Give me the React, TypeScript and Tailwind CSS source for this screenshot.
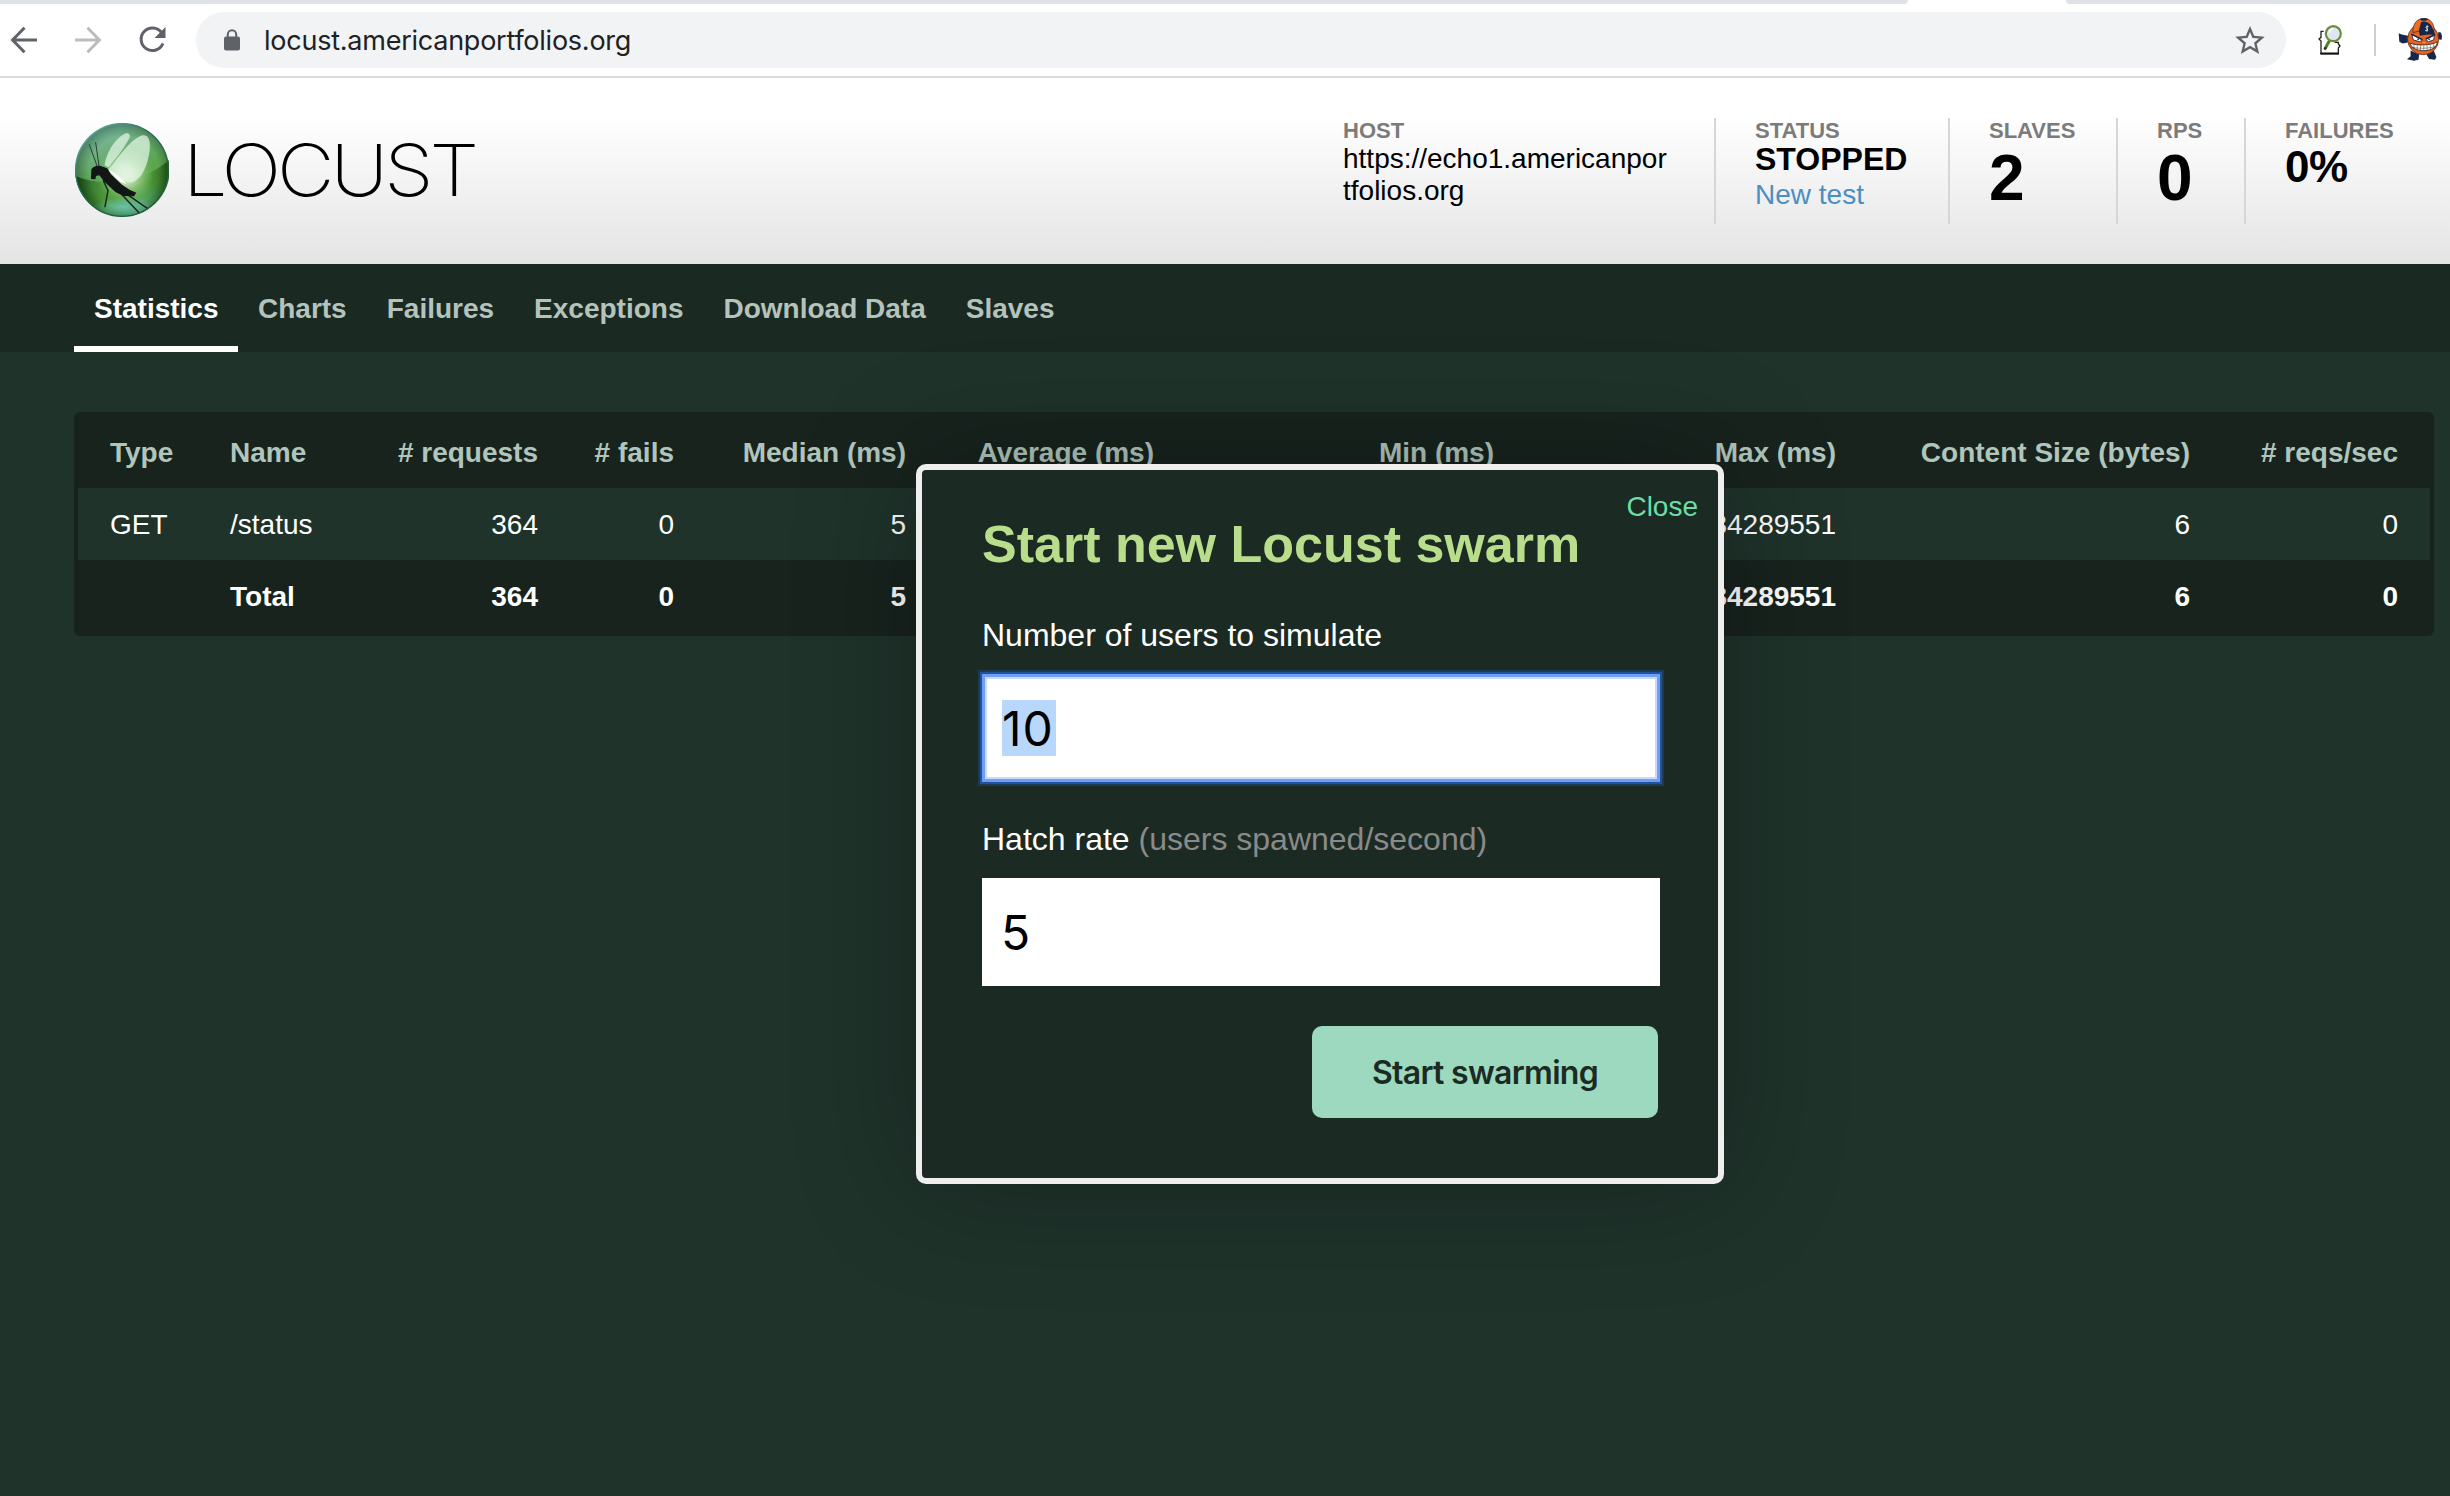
import React from "react";

const ARIAL = "font-['Liberation_Sans',Arial,sans-serif]";

function LocustLogo() {
  return (
    <svg viewBox="45 39 282 282" className="size-[94px] shrink-0">
      <defs>
        <linearGradient id="ball" x1="0.2" y1="0" x2="0.6" y2="1">
          <stop offset="0" stopColor="#84cbc6" />
          <stop offset="0.22" stopColor="#74b38b" />
          <stop offset="0.5" stopColor="#5fa75c" />
          <stop offset="0.75" stopColor="#57a33d" />
          <stop offset="1" stopColor="#5cae8e" />
        </linearGradient>
        <radialGradient id="edge" cx="0.52" cy="0.52" r="0.5">
          <stop offset="0.75" stopColor="#0b3a10" stopOpacity="0" />
          <stop offset="1" stopColor="#062a0a" stopOpacity="0.7" />
        </radialGradient>
        <radialGradient id="glow" cx="0.5" cy="0.5" r="0.5">
          <stop offset="0" stopColor="#ffffff" />
          <stop offset="0.3" stopColor="#eaf8df" stopOpacity="0.9" />
          <stop offset="1" stopColor="#8ed07a" stopOpacity="0" />
        </radialGradient>
        <linearGradient id="rim" x1="0" y1="0" x2="0.8" y2="1">
          <stop offset="0" stopColor="#7cc7cc" />
          <stop offset="0.4" stopColor="#2c6f5c" />
          <stop offset="1" stopColor="#1d5a35" />
        </linearGradient>
        <linearGradient id="lower" x1="0" y1="0" x2="1" y2="0">
          <stop offset="0" stopColor="#0f3a0c" stopOpacity="0.9" />
          <stop offset="0.35" stopColor="#2f7a20" stopOpacity="0.2" />
          <stop offset="0.7" stopColor="#3f8f28" stopOpacity="0.1" />
          <stop offset="1" stopColor="#0f3a0c" stopOpacity="0.8" />
        </linearGradient>
        <radialGradient id="foot" cx="0.5" cy="0.5" r="0.5">
          <stop offset="0" stopColor="#6cc3b0" stopOpacity="0.9" />
          <stop offset="1" stopColor="#6cc3b0" stopOpacity="0" />
        </radialGradient>
      </defs>
      <circle cx="186" cy="180" r="140" fill="url(#ball)" />
      <path d="M46 196C90 226 240 230 326 150A140 140 0 0 1 186 320A140 140 0 0 1 46 196Z" fill="url(#lower)" />
      <circle cx="186" cy="180" r="140" fill="url(#edge)" opacity="0.5" />
      <ellipse cx="190" cy="290" rx="90" ry="30" fill="url(#foot)" />
      <circle cx="196" cy="195" r="85" fill="url(#glow)" opacity="0.8" />
      <path d="M134 166C140 125 168 82 198 70C208 68 212 76 208 84C192 118 168 142 146 172Z" fill="#e4f6e6" fillOpacity="0.72" />
      <path d="M146 178C178 140 212 86 248 76C266 74 272 92 269 120C264 166 246 204 220 216C196 222 170 206 146 178Z" fill="#e4f6e6" fillOpacity="0.72" />
      <path d="M140 176C160 184 185 205 200 222L178 214Z" fill="#fff" />
      <g fill="none" stroke="#1b2622" strokeLinecap="round">
        <path d="M112 170L88 104" strokeWidth="2.5" />
        <path d="M117 168L107 98" strokeWidth="2.5" />
        <path d="M130 212L144 242L135 290" strokeWidth="4.5" />
        <path d="M186 254L237 308" strokeWidth="4.5" />
        <path d="M206 256L263 296" strokeWidth="4.5" />
      </g>
      <path d="M93 207L94 178C100 168 112 165 122 168L140 174C146 178 148 186 152 192L186 224L210 240L229 248L222 259L190 258L166 246L134 216L118 196L108 198L106 208Z" fill="#121716" />
      <circle cx="186" cy="180" r="139" fill="none" stroke="url(#rim)" strokeWidth="4" />
    </svg>
  );
}

function BackArrow({ className }: { className: string }) {
  return (
    <svg viewBox="0 0 28 28" className={className} fill="none" stroke="currentColor" strokeWidth="3">
      <path d="M27 14H3M14.500 1.800L2.600 14L14.500 26.200" />
    </svg>
  );
}

function Reload() {
  return (
    <svg viewBox="0 0 28 28" className="size-7 text-[#5f6368]">
      <path d="M23.500 6.500A11.300 11.300 0 1 0 24.900 17.500" fill="none" stroke="currentColor" strokeWidth="3" />
      <path d="M27.500 1V12H16.500Z" fill="currentColor" />
    </svg>
  );
}

function Lock() {
  return (
    <svg viewBox="0 0 18 22" className="h-[22px] w-[18px] text-[#5f6368]">
      <rect x="1" y="7.500" width="16" height="14" rx="2" fill="currentColor" />
      <path d="M4.800 8.500V5.500a4.200 4.200 0 0 1 8.400 0V8.500" fill="none" stroke="currentColor" strokeWidth="2" />
    </svg>
  );
}

function Star() {
  return (
    <svg viewBox="2 2 20 19" className="h-7 w-[30px] text-[#5f6368]" fill="currentColor">
      <path d="M22 9.240l-7.190-.62L12 2 9.190 8.630 2 9.240l5.460 4.730L5.820 21 12 17.270 18.180 21l-1.630-7.030L22 9.240zM12 15.400l-3.760 2.270 1-4.280-3.320-2.880 4.380-.38L12 6.100l1.710 4.040 4.380.38-3.320 2.880 1 4.280L12 15.400z" />
    </svg>
  );
}

function JsonSearchIcon() {
  return (
    <svg viewBox="354 72 75 96" className="h-8 w-[25px]" fill="none">
      <path d="M371 94H363V112L357 117L363 123V160H415V144L420 138L415 131V127H404" stroke="#222" strokeWidth="4" />
      <path d="M361 161H417" stroke="#111" strokeWidth="6" />
      <path d="M389 121L375 146" stroke="#4e7d2b" strokeWidth="9" />
      <path d="M378 142L373 149" stroke="#1f3a12" strokeWidth="7" />
      <circle cx="400" cy="101" r="22.500" fill="#dfe6f2" stroke="#688f38" strokeWidth="6.500" />
      <path d="M388 98a13 13 0 0 1 12-11" stroke="#fff" strokeWidth="4" />
    </svg>
  );
}

function Mascot() {
  return (
    <svg viewBox="593 54 134 130" className="h-[43px] w-[45px]">
      <path d="M594 100L603 104L622 108V128L606 131L596 126Z" fill="#16284a" />
      <path d="M714 96L721 98L725 108L724 120L712 118Z" fill="#16284a" />
      <path d="M630 152L656 164L654 180L640 183L619 179L630 170Z" fill="#16284a" />
      <path d="M678 164L700 152L708 172L704 180L686 178Z" fill="#16284a" />
      <circle cx="668" cy="118" r="47" fill="#e8641f" stroke="#4a2416" strokeWidth="2" />
      <path d="M637 98C636 70 650 56 670 55C690 56 702 70 701 92L680 88Z" fill="#ef6c1f" stroke="#16284a" strokeWidth="2" />
      <path d="M662 66C672 62 684 66 692 76L700 92L705 106C690 102 674 103 658 108L655 92Z" fill="#16284a" />
      <path d="M658 57C666 54 676 54 684 57L676 62H664Z" fill="#16284a" />
      <path d="M684 80C678 77 674 83 679 86C684 89 682 94 674 92M680 76V95" fill="none" stroke="#fff" strokeWidth="2.500" />
      <path d="M634 104L664 120L658 126L638 120Z" fill="#fff" stroke="#16284a" strokeWidth="2.500" />
      <path d="M702 106L676 119L684 126L700 120Z" fill="#fff" stroke="#16284a" strokeWidth="2.500" />
      <circle cx="653" cy="118" r="3" fill="#1d4fa0" />
      <circle cx="686" cy="118" r="3" fill="#1d4fa0" />
      <path d="M632 103L666 119M704 104L676 117" stroke="#16284a" strokeWidth="4" />
      <path d="M628 130C650 138 690 138 711 126C710 142 696 152 670 153C646 152 632 144 628 130Z" fill="#fff" stroke="#2a1a18" strokeWidth="2.500" />
      <path d="M632 142C650 147 692 147 706 139M640 134V148M650 136V150M660 137V152M670 137V153M680 137V152M690 136V150M700 132V146" fill="none" stroke="#3a3034" strokeWidth="1.500" />
      <ellipse cx="671" cy="128" rx="8" ry="6" fill="#f47a2a" stroke="#8a3512" strokeWidth="1.500" />
    </svg>
  );
}

function BrowserBar() {
  return (
    <div>
      <div className="flex h-1 justify-between bg-white">
        <div className="w-[1908px] rounded-br-[4px] bg-[#dee1e6]" />
        <div className="w-[384px] rounded-bl-[4px] bg-[#dee1e6]" />
      </div>
      <div className="flex h-[74px] items-center border-b-2 border-[#dadce2] bg-white pl-[10px]">
        <BackArrow className="size-7 text-[#5f6368]" />
        <BackArrow className="ml-9 size-7 rotate-180 text-[#babcbe]" />
        <div className="ml-9">
          <Reload />
        </div>
        <div className="ml-[30px] flex h-14 w-[2090px] items-center rounded-full bg-[#f1f3f4] pr-[21px] pl-[27px]">
          <Lock />
          <span className="ml-[23px] grow pt-[2px] font-['Inter',sans-serif] text-[27px] tracking-[-0.24px] text-[#202124]">
            locust.americanportfolios.org
          </span>
          <Star />
        </div>
        <div className="ml-8">
          <JsonSearchIcon />
        </div>
        <div className="ml-[31px] h-8 w-[2px] bg-[#cfcfd1]" />
        <div className="mb-[2px] ml-[22px]">
          <Mascot />
        </div>
      </div>
    </div>
  );
}

function InfoBox({ label, children, className }: { label: string; children: React.ReactNode; className: string }) {
  return (
    <div className={`h-[106px] pt-px ${className}`}>
      <div className="text-[22px] leading-6 font-bold text-[#7b7b7b]">{label}</div>
      {children}
    </div>
  );
}

function Header() {
  return (
    <header className="flex h-[186px] justify-between bg-linear-to-b from-white from-20% to-[#e4e4e4] pl-[75px]">
      <div className="mt-[45px] flex h-[94px] items-center">
        <LocustLogo />
        <span className="ml-[14px] origin-left scale-x-110 font-['Inter',sans-serif] text-[72px] leading-[94px] font-extralight tracking-[-3.6px] text-black">
          LOCUST
        </span>
      </div>
      <div className="mt-10 flex text-black">
        <InfoBox label="HOST" className="w-[411px] pl-10">
          <div className="w-[330px] text-[28px] leading-8 break-all">https://echo1.americanportfolios.org</div>
        </InfoBox>
        <InfoBox label="STATUS" className="w-[234px] border-l-2 border-[#d6d6d6] pl-[39px]">
          <div className="text-[32px] leading-8 font-bold">STOPPED</div>
          <div className="text-[28px] leading-10 text-[#4a8fc1]">New test</div>
        </InfoBox>
        <InfoBox label="SLAVES" className="w-[168px] border-l-2 border-[#d6d6d6] pl-[39px]">
          <div className="text-[64px] leading-[70px] font-bold">2</div>
        </InfoBox>
        <InfoBox label="RPS" className="w-[128px] border-l-2 border-[#d6d6d6] pl-[39px]">
          <div className="text-[64px] leading-[70px] font-bold">0</div>
        </InfoBox>
        <InfoBox label="FAILURES" className="w-[206px] border-l-2 border-[#d6d6d6] pl-[39px]">
          <div className="text-[44px] leading-[48px] font-bold tracking-[-0.5px]">0%</div>
        </InfoBox>
      </div>
    </header>
  );
}

const TABS = ["Statistics", "Charts", "Failures", "Exceptions", "Download Data", "Slaves"];

function Nav() {
  return (
    <nav className="flex h-[88px] bg-[#1b2923] pl-[74px] text-[28px] font-bold">
      {TABS.map((tab, i) => (
        <div
          key={tab}
          className={
            i === 0
              ? "flex items-center border-y-[6px] border-t-transparent border-b-white pt-[2px] pr-[19.5px] pl-5 text-white"
              : "flex items-center px-5 pt-[2px] text-[#b4c3bb]"
          }
        >
          {tab}
        </div>
      ))}
    </nav>
  );
}

const GRID = "grid h-[72px] grid-cols-[120px_140px_168px_136px_232px_248px_340px_342px_354px_208px] items-center pt-[2px] pl-8";
const HEADERS = ["Type", "Name", "# requests", "# fails", "Median (ms)", "Average (ms)", "Min (ms)", "Max (ms)", "Content Size (bytes)", "# reqs/sec"];
const STATUS_ROW = ["GET", "/status", "364", "0", "5", "", "", "34289551", "6", "0"];
const TOTAL_ROW = ["", "Total", "364", "0", "5", "", "", "34289551", "6", "0"];

function Row({ cells, className }: { cells: string[]; className: string }) {
  return (
    <div className={`${GRID} ${className}`}>
      {cells.map((cell, i) => (
        <div key={i} className={i < 2 ? "whitespace-nowrap" : "text-right whitespace-nowrap"}>
          {cell}
        </div>
      ))}
    </div>
  );
}

function StatsTable() {
  return (
    <div className="mt-[60px] ml-[74px] h-[224px] w-[2360px] rounded-md bg-[#18231e] p-1 text-[28px]">
      <Row cells={HEADERS} className="font-bold text-[#b0c6bc]" />
      <Row cells={STATUS_ROW} className="bg-[#1f332b] text-white" />
      <Row cells={TOTAL_ROW} className="font-bold text-white" />
    </div>
  );
}

function SwarmDialog() {
  return (
    <div className="absolute top-[464px] left-[916px] h-[720px] w-[808px] rounded-[10px] border-[6px] border-[#efeeee] bg-[#1b2a23] pt-11 pr-[58px] pl-[60px] text-white shadow-[0_0_120px_rgba(0,0,0,0.3)]">
      <a className="absolute top-[17px] right-5 text-[28px] leading-10 text-[#6cdda6]">Close</a>
      <h2 className="text-[52px] leading-[60px] font-bold whitespace-nowrap text-[#b8de8c]">Start new Locust swarm</h2>
      <div className="mt-[41px] text-[32px] leading-10">Number of users to simulate</div>
      <div className="mt-[19px] flex h-[108px] items-center bg-white pl-5 font-['Inter',sans-serif] text-[48px] text-black shadow-[inset_0_0_0_3px_#6f9ff5,inset_0_0_0_5px_#c9dafb,0_0_0_2px_#2152a0,0_0_0_4px_#1c3a50]">
        <span className="h-14 w-[54px] bg-[#b9d6fb] leading-[58px] tracking-[1px]">10</span>
      </div>
      <div className="mt-[37px] text-[32px] leading-10">
        Hatch rate <span className="text-[#8a8a8a]">(users spawned/second)</span>
      </div>
      <div className="mt-[19px] flex h-[108px] items-center bg-white pl-[19px] font-['Inter',sans-serif] text-[48px] text-black">
        <span className="pt-[2px] leading-[56px]">5</span>
      </div>
      <div className="mt-10 flex justify-end pr-[2px]">
        <div className="flex h-[92px] w-[346px] items-center justify-center rounded-[10px] bg-[#9cd9be] pt-[2px] font-['Inter',sans-serif] text-[32px] font-semibold tracking-[-0.7px] text-[#1b2a23]">
          Start swarming
        </div>
      </div>
    </div>
  );
}

export default function App() {
  return (
    <div className={`relative h-[1496px] w-[2450px] overflow-hidden bg-[#1f332b] ${ARIAL}`}>
      <BrowserBar />
      <Header />
      <Nav />
      <StatsTable />
      <SwarmDialog />
    </div>
  );
}
